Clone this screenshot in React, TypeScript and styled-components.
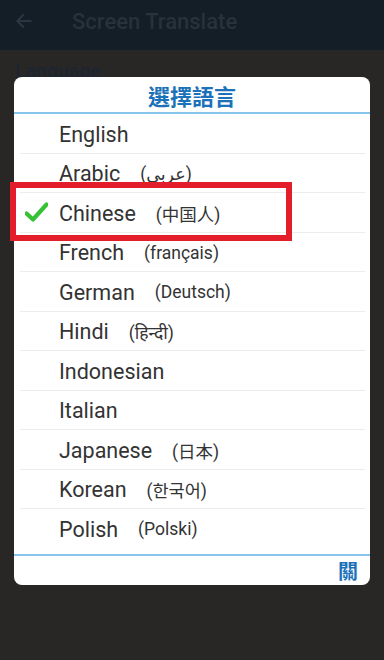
import React from "react";
import styled, { createGlobalStyle } from "styled-components";

const Global = createGlobalStyle`
  html, body { margin: 0; padding: 0; }
  body {
    width: 384px;
    height: 660px;
    background: #272727;
    font-family: Roboto, "Noto Sans", "Liberation Sans", sans-serif;
    overflow: hidden;
  }
`;

const Page = styled.div`
  position: relative;
  width: 384px;
  height: 660px;
  background: #282726;
`;

const AppBar = styled.div`
  height: 50px;
  background: #131e27;
  display: flex;
  align-items: center;
  padding: 0 0 8px 14px;
  gap: 38px;
  box-sizing: border-box;
`;

const AppTitle = styled.div`
  font-size: 22px;
  font-weight: 500;
  color: #27323b;
`;

const Content = styled.div`
  padding: 10px 15px;
`;

const SectionLabel = styled.div`
  font-size: 19.5px;
  font-weight: 500;
  color: #1c2530;
`;

const Overlay = styled.div`
  position: absolute;
  inset: 0;
  padding: 77px 14px 0 14px;
  box-sizing: border-box;
`;

const Dialog = styled.div`
  width: 356px;
  background: #ffffff;
  border-radius: 8px;
  display: flex;
  flex-direction: column;
`;

const DialogTitle = styled.div`
  height: 37px;
  display: flex;
  align-items: center;
  justify-content: center;
  font-family: "Noto Sans CJK TC", sans-serif;
  font-weight: 700;
  font-size: 22px;
  color: #1b72b8;
  border-bottom: 2px solid #86c6ec;
  padding-top: 1px;
  box-sizing: border-box;
`;

const List = styled.div`
  display: flex;
  flex-direction: column;
  padding-bottom: 5px;
  border-bottom: 2px solid #86c6ec;
`;

const Row = styled.div<{ $last?: boolean }>`
  position: relative;
  height: 39.5px;
  margin: 0 5px 0 6px;
  padding-top: 2px;
  box-sizing: border-box;
  display: flex;
  align-items: center;
  border-bottom: 1px solid ${(p) => (p.$last ? "transparent" : "#ececec")};
`;

const CheckSlot = styled.div`
  width: 34px;
  padding-left: 5px;
  display: flex;
  align-items: center;
  margin-top: -2px;
`;

const Name = styled.span`
  font-size: 21.5px;
  color: #333333;
`;

const Native = styled.span`
  margin-left: 20px;
  font-size: 17.5px;
  color: #333333;
  font-family: Roboto, "Noto Sans", "Noto Sans CJK SC", "DejaVu Sans", sans-serif;
`;

const Highlight = styled.div`
  position: absolute;
  left: -10px;
  top: -11px;
  width: 282px;
  height: 59px;
  border: 6px solid #e41d2b;
  box-sizing: border-box;
  pointer-events: none;
`;

const Footer = styled.div`
  height: 29px;
  display: flex;
  align-items: center;
  justify-content: flex-end;
  padding-right: 12px;
`;

const CloseButton = styled.span`
  font-family: "Noto Sans CJK TC", sans-serif;
  font-weight: 700;
  font-size: 20px;
  color: #1b72b8;
`;

const BackArrow = () => (
  <svg width="20" height="20" viewBox="0 0 24 24" fill="none" stroke="#2c3944" strokeWidth="2.2" strokeLinecap="square">
    <path d="M20 12H5" />
    <path d="M11 5l-7 7 7 7" strokeLinejoin="miter" />
  </svg>
);

const Check = () => (
  <svg width="23" height="20" viewBox="0 0 23 20">
    <path d="M1.5 11.5 L8 17.5 L21.5 2.5" fill="none" stroke="#35c335" strokeWidth="4.2" strokeLinecap="round" strokeLinejoin="round" />
  </svg>
);

type Lang = { name: string; native?: string; lang?: string };

const langs: Lang[] = [
  { name: "English" },
  { name: "Arabic", native: "(عربي)", lang: "ar" },
  { name: "Chinese", native: "(中国人)", lang: "zh-CN" },
  { name: "French", native: "(français)" },
  { name: "German", native: "(Deutsch)" },
  { name: "Hindi", native: "(हिन्दी)", lang: "hi" },
  { name: "Indonesian" },
  { name: "Italian" },
  { name: "Japanese", native: "(日本)", lang: "ja" },
  { name: "Korean", native: "(한국어)", lang: "ko" },
  { name: "Polish", native: "(Polski)" },
];

export default function App() {
  return (
    <Page>
      <Global />
      <AppBar>
        <BackArrow />
        <AppTitle>Screen Translate</AppTitle>
      </AppBar>
      <Content>
        <SectionLabel>Language</SectionLabel>
      </Content>
      <Overlay>
        <Dialog>
          <DialogTitle>選擇語言</DialogTitle>
          <List>
            {langs.map((l, i) => (
              <Row key={l.name} $last={i === langs.length - 1}>
                <CheckSlot>{l.name === "Chinese" && <Check />}</CheckSlot>
                <Name>{l.name}</Name>
                {l.native && <Native lang={l.lang}>{l.native}</Native>}
                {l.name === "Chinese" && <Highlight />}
              </Row>
            ))}
          </List>
          <Footer>
            <CloseButton>關</CloseButton>
          </Footer>
        </Dialog>
      </Overlay>
    </Page>
  );
}
